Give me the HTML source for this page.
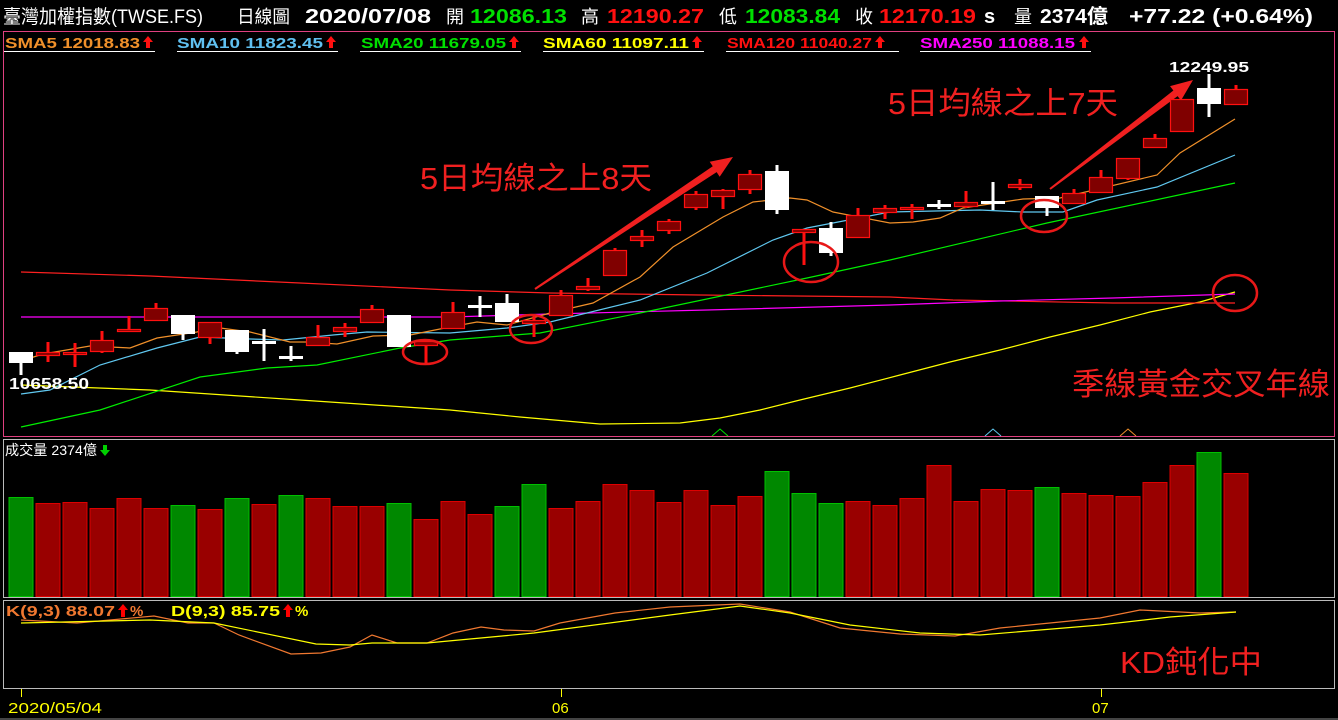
<!DOCTYPE html>
<html><head><meta charset="utf-8"><style>
html,body{margin:0;padding:0;background:#000;width:1338px;height:720px;overflow:hidden}
svg{display:block}
text{font-family:"Liberation Sans","Noto Sans CJK TC",sans-serif}
</style></head><body>
<svg id="s" width="1338" height="720" xmlns="http://www.w3.org/2000/svg">
<rect width="1338" height="720" fill="#000"/>
<!-- header -->
<g lengthAdjust="spacingAndGlyphs">
<text y="23" font-size="19" fill="#fff" font-family="Liberation Serif,'Noto Serif CJK SC',serif" x="3" textLength="200" lengthAdjust="spacingAndGlyphs">臺灣加權指數(TWSE.FS)</text>
<text x="237" y="23" font-size="18" fill="#fff" textLength="53" lengthAdjust="spacingAndGlyphs">日線圖</text>
<g font-size="20" font-weight="bold">
<text x="305" y="23" fill="#fff" textLength="126" lengthAdjust="spacingAndGlyphs">2020/07/08</text>
<text x="446" y="23" fill="#fff" font-weight="normal" font-size="18">開</text>
<text x="470" y="23" fill="#00e000" textLength="97" lengthAdjust="spacingAndGlyphs">12086.13</text>
<text x="581" y="23" fill="#fff" font-weight="normal" font-size="18">高</text>
<text x="607" y="23" fill="#ff1010" textLength="97" lengthAdjust="spacingAndGlyphs">12190.27</text>
<text x="719" y="23" fill="#fff" font-weight="normal" font-size="18">低</text>
<text x="745" y="23" fill="#00e000" textLength="95" lengthAdjust="spacingAndGlyphs">12083.84</text>
<text x="855" y="23" fill="#fff" font-weight="normal" font-size="18">收</text>
<text x="879" y="23" fill="#ff1010" textLength="97" lengthAdjust="spacingAndGlyphs">12170.19</text>
<text x="984" y="23" fill="#fff">s</text>
<text x="1014" y="23" fill="#fff" font-weight="normal" font-size="18">量</text>
<text x="1040" y="23" fill="#fff" textLength="68" lengthAdjust="spacingAndGlyphs">2374億</text>
<text x="1129" y="23" fill="#fff" textLength="184" lengthAdjust="spacingAndGlyphs">+77.22 (+0.64%)</text>
</g>
</g>
<!-- panels -->
<rect x="3.5" y="31.5" width="1331" height="405" fill="none" stroke="#e04080" stroke-width="1"/>
<rect x="3.5" y="439.5" width="1331" height="158" fill="none" stroke="#bbb" stroke-width="1"/>
<rect x="3.5" y="600.5" width="1331" height="88" fill="none" stroke="#bbb" stroke-width="1"/>
<!-- SMA legend -->
<g font-size="15" font-weight="bold">
<text x="5" y="48" fill="#f0902a" textLength="135" lengthAdjust="spacingAndGlyphs">SMA5 12018.83</text>
<text x="177" y="48" fill="#60c0f0" textLength="146" lengthAdjust="spacingAndGlyphs">SMA10 11823.45</text>
<text x="361" y="48" fill="#00e000" textLength="145" lengthAdjust="spacingAndGlyphs">SMA20 11679.05</text>
<text x="543" y="48" fill="#ffff00" textLength="146" lengthAdjust="spacingAndGlyphs">SMA60 11097.11</text>
<text x="727" y="48" fill="#ff1010" textLength="145" lengthAdjust="spacingAndGlyphs">SMA120 11040.27</text>
<text x="920" y="48" fill="#ff00ff" textLength="155" lengthAdjust="spacingAndGlyphs">SMA250 11088.15</text>
</g>
<g id="legarrows" fill="#ff1010"></g>
<g stroke="#fff" stroke-width="1">
<line x1="4" y1="51.5" x2="155" y2="51.5"/><line x1="177" y1="51.5" x2="338" y2="51.5"/>
<line x1="360" y1="51.5" x2="521" y2="51.5"/><line x1="543" y1="51.5" x2="704" y2="51.5"/>
<line x1="726" y1="51.5" x2="899" y2="51.5"/><line x1="920" y1="51.5" x2="1091" y2="51.5"/>
</g>
<g id="arrows"></g>
<!-- MA lines -->
<g fill="none" stroke-width="1.2">
<polyline stroke="#ffff00" points="21,385 150,390 300,400 450,410 520,417 600,424 680,423 720,418 760,410 800,400 850,388 900,375 950,362 1000,350 1050,337 1100,325 1150,312 1200,302 1235,292"/>
<polyline stroke="#ff2020" points="21,272 150,276 300,283 450,290 550,293 700,295 890,297 953,300 1113,303 1235,303"/>
<polyline stroke="#ff00ff" points="21,317 450,317 550,314 707,310 890,305 1000,301 1113,298 1235,294"/>
<polyline stroke="#00ee00" points="21,427 100,410 200,377 267,368 317,365 400,348 450,340 540,333 640,313 807,278 890,260 1047,223 1235,183"/>
<polyline stroke="#60c8f0" points="21,394 50,390 100,365 157,348 200,337 250,339 283,340 333,335 367,332 450,333 507,328 550,322 640,300 707,273 773,240 807,228 890,212 980,210 1023,212 1063,212 1097,200 1157,187 1235,155"/>
<polyline stroke="#f0902a" points="21,361 43,354 90,346 130,348 157,338 197,332 213,327 250,332 290,342 307,342 337,344 373,336 410,335 450,327 477,322 507,325 550,313 593,303 640,277 673,247 723,217 753,202 790,198 807,200 833,212 890,223 913,222 940,218 963,208 1023,199 1060,198 1157,175 1180,153 1235,119"/>
</g>
<g fill="none" stroke-width="1">
<polyline stroke="#00e000" points="712,436 720,429 728,436"/>
<polyline stroke="#60c8f0" points="985,436 993,429 1001,436"/>
<polyline stroke="#f0902a" points="1120,436 1128,429 1136,436"/>
</g>
<g id="candles"></g>
<g id="vol"></g>
<text x="9" y="389" font-size="16" font-weight="bold" fill="#fff" font-family="Liberation Serif,serif" textLength="80" lengthAdjust="spacingAndGlyphs">10658.50</text>
<text x="1169" y="72" font-size="15" font-weight="bold" fill="#fff" font-family="Liberation Serif,serif" textLength="80" lengthAdjust="spacingAndGlyphs">12249.95</text>
<!-- circles -->
<g fill="none" stroke="#e81818" stroke-width="2.5">
<ellipse cx="425" cy="352" rx="22" ry="12"/>
<ellipse cx="531" cy="329" rx="21" ry="14"/>
<ellipse cx="811" cy="262" rx="27" ry="20"/>
<ellipse cx="1044" cy="216" rx="23" ry="16"/>
<ellipse cx="1235" cy="293" rx="22" ry="18"/>
</g>
<!-- annotations -->
<g fill="#f02020" font-size="31">
<text x="420" y="189" textLength="232" lengthAdjust="spacingAndGlyphs">5日均線之上8天</text>
<text x="888" y="114" textLength="230" lengthAdjust="spacingAndGlyphs">5日均線之上7天</text>
<text x="1072" y="395" textLength="258" lengthAdjust="spacingAndGlyphs">季線黃金交叉年線</text>
<text x="1120" y="673" textLength="142" lengthAdjust="spacingAndGlyphs">KD鈍化中</text>
</g>
<!-- volume label -->
<text x="5" y="455" font-size="14" fill="#fff" textLength="92" lengthAdjust="spacingAndGlyphs">成交量 2374億</text>
<path d="M103 445 L107 445 L107 450 L110 450 L105 456 L100 450 L103 450Z" fill="#00d000"/>
<!-- KD -->
<g font-size="15" font-weight="bold">
<text x="6" y="616" fill="#f07830" textLength="109" lengthAdjust="spacingAndGlyphs">K(9,3) 88.07</text>
<text x="130" y="616" fill="#f07830">%</text>
<text x="171" y="616" fill="#ffff00" textLength="109" lengthAdjust="spacingAndGlyphs">D(9,3) 85.75</text>
<text x="295" y="616" fill="#ffff00">%</text>
</g>
<path d="M123 604 L128 610 L125 610 L125 617 L121 617 L121 610 L118 610Z" fill="#f00"/>
<path d="M288 604 L293 610 L290 610 L290 617 L286 617 L286 610 L283 610Z" fill="#f00"/>
<g fill="none" stroke-width="1.2">
<polyline stroke="#f07830" points="21,620 77,623 154,616 188,623 214,623 239,635 291,654 321,653 350,647 372,635 397,643 427,643 453,633 481,627 504,630 534,631 560,623 615,613 670,607 740,604 790,612 840,628 900,634 955,636 1000,628 1060,622 1100,618 1140,610 1200,613 1236,612"/>
<polyline stroke="#ffff00" points="21,623 150,620 214,623 316,644 350,645 372,643 427,643 534,633 670,615 740,606 790,613 850,625 920,633 980,635 1040,630 1100,625 1170,617 1236,612"/>
</g>
<!-- date axis -->
<g stroke="#ffff00" stroke-width="1"><line x1="21.5" y1="689" x2="21.5" y2="697"/><line x1="561.5" y1="689" x2="561.5" y2="697"/><line x1="1101.5" y1="689" x2="1101.5" y2="697"/></g>
<g fill="#ffff00" font-size="15"><text x="8" y="713" textLength="94" lengthAdjust="spacingAndGlyphs">2020/05/04</text><text x="552" y="713">06</text><text x="1092" y="713">07</text></g>
<rect x="0" y="718" width="1338" height="2" fill="#444"/>
</svg>
<script>
var NS="http://www.w3.org/2000/svg";
function el(p,t,a){var e=document.createElementNS(NS,t);for(var k in a)e.setAttribute(k,a[k]);p.appendChild(e);return e;}
var C=[['w',352,363,352,375],['r',352,356,342,362],['r',352,355,343,367],['r',340,352,331,353],['r',329,332,316,332],['r',308,321,303,321],['w',315,334,315,340],['r',322,338,322,344],['w',330,352,330,354],['w',341,344,329,361],['w',356,359,346,361],['r',337,346,325,346],['r',327,332,323,337],['r',309,323,305,323],['w',315,347,315,347],['r',341,346,341,364],['r',312,329,302,329],['w',305,308,296,317],['w',303,322,294,322],['r',320,324,316,337],['r',295,316,290,316],['r',286,290,278,291],['r',250,276,248,276],['r',236,241,230,247],['r',221,231,219,234],['r',194,208,191,210],['r',190,197,189,209],['r',174,190,170,194],['w',171,210,165,214],['r',229,233,229,265],['w',228,253,222,256],['r',215,238,208,238],['r',208,213,205,219],['r',207,210,204,219],['w',204,207,200,209],['r',202,207,191,208],['w',201,204,182,210],['r',184,188,179,190],['w',196,208,196,216],['r',193,204,189,204],['r',177,193,170,193],['r',158,179,158,180],['r',138,148,134,148],['r',99,132,99,132],['w',88,104,74,117],['r',89,105,85,105]];
var g=document.getElementById('candles');
C.forEach(function(c,i){var x=21+27*i;var col=c[0]=='w'?'#fff':'#ff1010';
el(g,'rect',{x:x-1.5,y:c[3],width:3,height:c[4]-c[3],fill:col});
if(c[0]=='w')el(g,'rect',{x:x-12,y:c[1],width:24,height:Math.max(2,c[2]-c[1]),fill:'#fff'});
else el(g,'rect',{x:x-11.5,y:c[1]+.5,width:23,height:Math.max(2,c[2]-c[1]-1),fill:'#800000',stroke:'#ff1010','stroke-width':1.2});});
var V=[['g',497],['r',503],['r',502],['r',508],['r',498],['r',508],['g',505],['r',509],['g',498],['r',504],['g',495],['r',498],['r',506],['r',506],['g',503],['r',519],['r',501],['r',514],['g',506],['g',484],['r',508],['r',501],['r',484],['r',490],['r',502],['r',490],['r',505],['r',496],['g',471],['g',493],['g',503],['r',501],['r',505],['r',498],['r',465],['r',501],['r',489],['r',490],['g',487],['r',493],['r',495],['r',496],['r',482],['r',465],['g',452],['r',473]];
var v=document.getElementById('vol');
V.forEach(function(c,i){var x=21+27*i;
el(v,'rect',{x:x-12,y:c[1]+.5,width:24,height:596-c[1],fill:c[0]=='g'?'#008800':'#990000',stroke:c[0]=='g'?'#00c000':'#dd0000','stroke-width':1});});
var la=document.getElementById('legarrows');
[148,331,514,697,880,1084].forEach(function(x){el(la,'path',{d:'M'+x+' 36 L'+(x+5)+' 42 L'+(x+2)+' 42 L'+(x+2)+' 48 L'+(x-2)+' 48 L'+(x-2)+' 42 L'+(x-5)+' 42Z'});});
var a=document.getElementById('arrows');
function arrow(x1,y1,x2,y2){var dx=x2-x1,dy=y2-y1,L=Math.hypot(dx,dy),ux=dx/L,uy=dy/L,nx=-uy,ny=ux;
var hb=22,hw=9,w0=1,w1=3.5;var bx=x2-ux*hb,by=y2-uy*hb;
var pts=[[x1+nx*w0,y1+ny*w0],[bx+nx*w1,by+ny*w1],[bx+nx*hw,by+ny*hw],[x2,y2],[bx-nx*hw,by-ny*hw],[bx-nx*w1,by-ny*w1],[x1-nx*w0,y1-ny*w0]];
el(a,'polygon',{points:pts.map(function(p){return p.join(',')}).join(' '),fill:'#f02020'});}
arrow(535,289,733,157);arrow(1050,189,1193,80);
</script>
</body></html>
